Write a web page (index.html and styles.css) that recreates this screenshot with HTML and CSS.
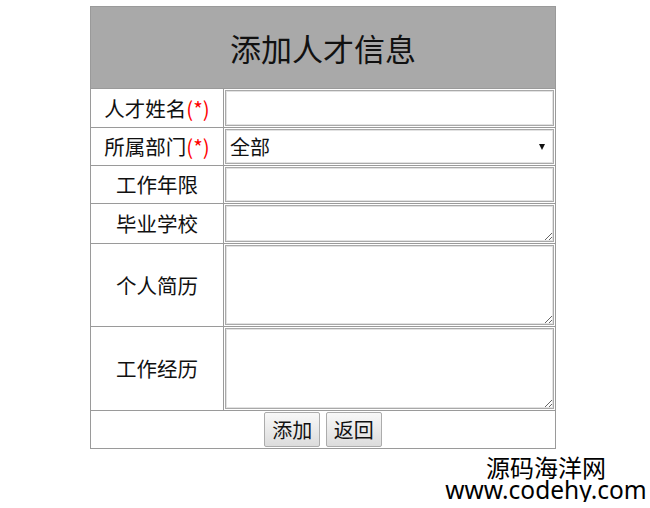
FILE: index.html
```html
<!DOCTYPE html>
<html lang="zh-CN">
<head>
<meta charset="utf-8">
<title>添加人才信息</title>
<link rel="stylesheet" href="styles.css">
</head>
<body>
<table class="form-table">
  <tr class="row-head">
    <th colspan="2" class="head">添加人才信息</th>
  </tr>
  <tr class="row-1">
    <td class="label">人才姓名<span class="req">(*)</span></td>
    <td class="field"><input type="text" class="txt h36"></td>
  </tr>
  <tr class="row-2">
    <td class="label">所属部门<span class="req">(*)</span></td>
    <td class="field">
      <div class="select-wrap">
        <select class="sel"><option>全部</option></select>
        <span class="arrow"></span>
      </div>
    </td>
  </tr>
  <tr class="row-3">
    <td class="label">工作年限</td>
    <td class="field"><input type="text" class="txt h35"></td>
  </tr>
  <tr class="row-4">
    <td class="label">毕业学校</td>
    <td class="field"><textarea class="area h37"></textarea></td>
  </tr>
  <tr class="row-5">
    <td class="label">个人简历</td>
    <td class="field"><textarea class="area h80"></textarea></td>
  </tr>
  <tr class="row-6">
    <td class="label">工作经历</td>
    <td class="field"><textarea class="area h81"></textarea></td>
  </tr>
  <tr class="row-7">
    <td colspan="2" class="actions">
      <button type="button" class="btn">添加</button>
      <button type="button" class="btn">返回</button>
    </td>
  </tr>
</table>
<div class="watermark">
  <div class="wm-cn">源码海洋网</div>
  <div class="wm-url">www.codehy.com</div>
</div>
</body>
</html>
```

FILE: styles.css
```css
html, body {
  background: #ffffff;
}
body {
  margin: 6px 0 0 0;
  font-family: "Noto Sans CJK SC", "Noto Sans", sans-serif;
  color: #111;
}
.form-table {
  margin-left: 90px;
  width: 466px;
  border-collapse: collapse;
  border: 1px solid #6d6d6d;
}
.form-table th,
.form-table td {
  border: 1px solid #9a9a9a;
  padding: 1px;
  vertical-align: middle;
}
.head {
  background: #a9a9a9;
  height: 79px;
  font-size: 31px;
  font-weight: normal;
  text-align: center;
  color: #111;
  line-height: 1;
}
.label {
  width: 130px;
  text-align: center;
  font-size: 20.5px;
  line-height: 1;
  white-space: nowrap;
}
.req {
  color: #ff0000;
}
.field {
  padding: 1px;
}
.txt,
.area,
.sel {
  display: block;
  width: 100%;
  box-sizing: border-box;
  margin: 0;
  border: 1px solid #a9a9a9;
  box-shadow: inset 0 0 0 1px #e2e2e2;
  background: #fff;
  font-family: "Noto Sans CJK SC", sans-serif;
  font-size: 20px;
  outline: none;
}
.h36 { height: 36px; }
.h35 { height: 35px; }
.h37 { height: 37px; }
.h80 { height: 80px; }
.h81 { height: 81px; }
.area {
  resize: both;
}
.select-wrap {
  position: relative;
}
.sel {
  height: 35px;
  -webkit-appearance: none;
  appearance: none;
  padding: 0 0 0 4px;
  color: #111;
  border-radius: 0;
}
.arrow {
  position: absolute;
  right: 9px;
  top: 15px;
  width: 0;
  height: 0;
  border-left: 3px solid transparent;
  border-right: 3px solid transparent;
  border-top: 6px solid #111;
}
.actions {
  text-align: center;
  height: 35px;
  padding: 1px;
}
.btn {
  height: 35px;
  padding: 0 7px;
  margin: 0 1px;
  font-family: "Noto Sans CJK SC", sans-serif;
  font-size: 20px;
  color: #111;
  background: linear-gradient(#f8f8f8, #dcdcdc);
  border: 1px solid #acacac;
  border-radius: 2px;
  vertical-align: middle;
}
.watermark {
  margin: 6px 0 0 444px;
  width: 204px;
  text-align: center;
  color: #000;
  line-height: 23px;
}
.wm-cn {
  font-size: 24px;
}
.wm-url {
  font-family: "Noto Sans", "Open Sans", sans-serif;
  font-size: 24.5px;
  line-height: 24px;
  white-space: nowrap;
}
```
